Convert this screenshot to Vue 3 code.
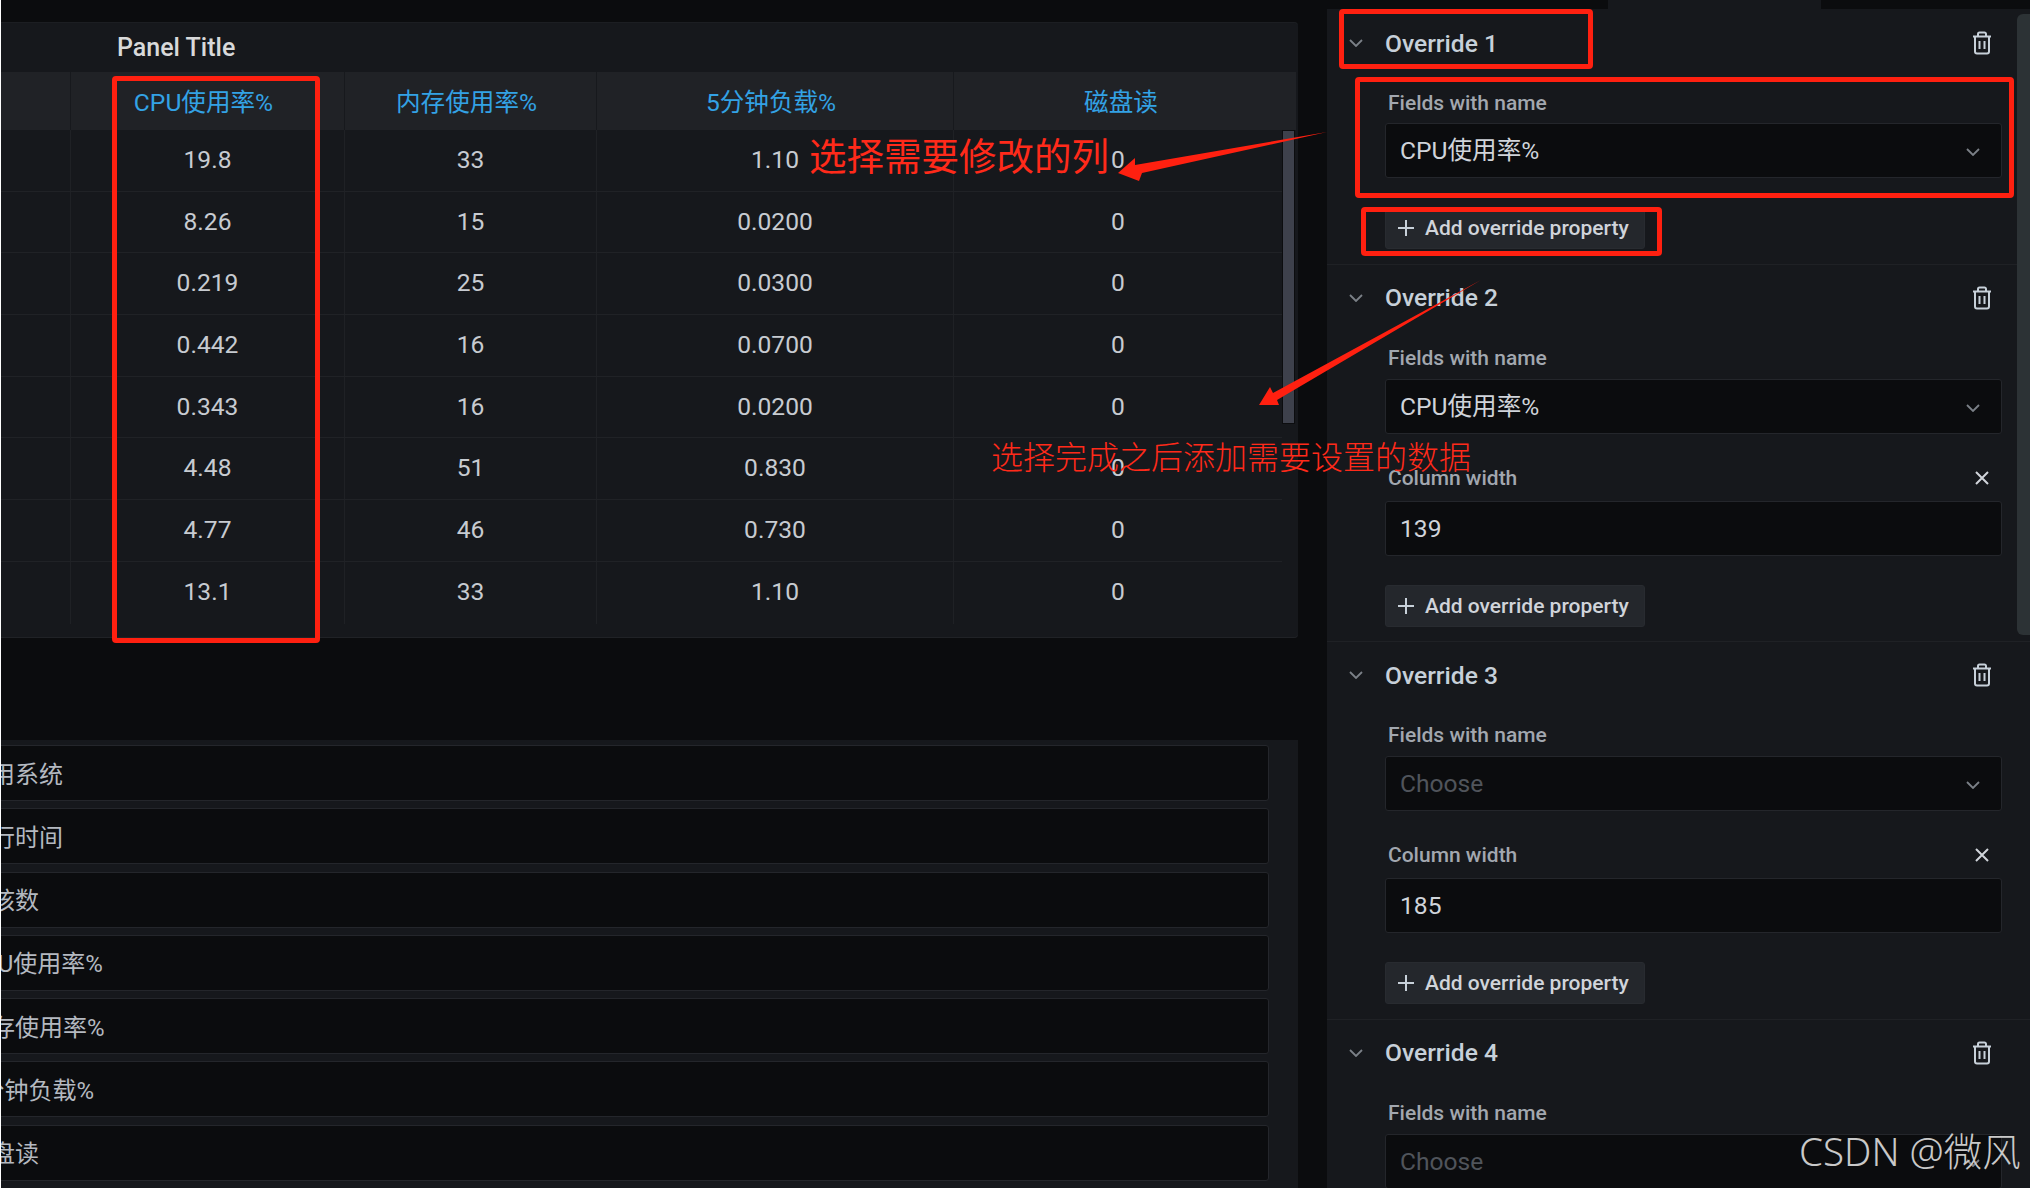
<script setup>
const rows = [
  ['19.8', '33', '1.10', '0'],
  ['8.26', '15', '0.0200', '0'],
  ['0.219', '25', '0.0300', '0'],
  ['0.442', '16', '0.0700', '0'],
  ['0.343', '16', '0.0200', '0'],
  ['4.48', '51', '0.830', '0'],
  ['4.77', '46', '0.730', '0'],
  ['13.1', '33', '1.10', '0']
]
const headers = ['CPU使用率%', '内存使用率%', '5分钟负载%', '磁盘读']
const options = ['应用系统', '运行时间', '内核数', 'CPU使用率%', '内存使用率%', '5分钟负载%', '磁盘读']
const overrides = [
  { name: 'Override 1', field: 'CPU使用率%', width: null },
  { name: 'Override 2', field: 'CPU使用率%', width: '139' },
  { name: 'Override 3', field: '', width: '185' },
  { name: 'Override 4', field: '', width: null, last: true }
]
</script>

<template>
  <div class="page">
    <main class="main">
      <section class="panel">
        <h2 class="panel-title">Panel Title</h2>
        <div class="grid head-row">
          <div class="cell head-cell"></div>
          <div v-for="h in headers" :key="h" class="cell head-cell">{{ h }}</div>
        </div>
        <div class="table-body">
          <div v-for="(r, i) in rows" :key="i" class="grid body-row">
            <div class="cell"></div>
            <div v-for="(v, j) in r" :key="j" class="cell">{{ v }}</div>
          </div>
        </div>
        <div class="table-scroll"></div>
      </section>
      <section class="options">
        <div v-for="o in options" :key="o" class="option">{{ o }}</div>
      </section>
    </main>

    <div class="gutter"></div>

    <aside class="side">
      <div class="side-top"><div class="tab"></div></div>
      <div class="side-body">
        <div v-for="o in overrides" :key="o.name" class="override">
          <div class="override-head">
            <svg class="chev" viewBox="0 0 14 8"><path d="M1 1l6 6 6-6" /></svg>
            <span class="override-name">{{ o.name }}</span>
            <svg class="trash" viewBox="0 0 20 24">
              <path d="M6 5V3a1.5 1.5 0 0 1 1.5-1.5h5A1.5 1.5 0 0 1 14 3v2M1 5.5h18M3 5.5v15a2 2 0 0 0 2 2h10a2 2 0 0 0 2-2v-15M7.5 10v8M12.5 10v8" />
            </svg>
          </div>
          <div class="label">Fields with name</div>
          <div class="control">
            <span v-if="o.field">{{ o.field }}</span>
            <span v-else class="placeholder">Choose</span>
            <svg class="chev select-chev" viewBox="0 0 14 8"><path d="M1 1l6 6 6-6" /></svg>
          </div>
          <template v-if="o.width">
            <div class="label label-prop">
              <span>Column width</span>
              <svg class="close" viewBox="0 0 14 14"><path d="M1 1l12 12M13 1L1 13" /></svg>
            </div>
            <div class="control">{{ o.width }}</div>
          </template>
          <button v-if="!o.last" class="add" type="button">
            <svg class="plus" viewBox="0 0 16 16"><path d="M8 0v16M0 8h16" /></svg>
            Add override property
          </button>
        </div>
      </div>
      <div class="side-scroll"></div>
    </aside>

    <div class="mark box-cpu"></div>
    <div class="mark box-title"></div>
    <div class="mark box-field"></div>
    <div class="mark box-add"></div>
    <svg class="arrows" viewBox="0 0 2044 1188">
      <polygon points="1327,132 1135,165 1135,158 1118,173 1139,181 1142,173" />
      <polygon points="1481,280 1273,393 1270,387 1259,405 1279,405 1277,400" />
    </svg>
    <div class="note note-one">选择需要修改的列</div>
    <div class="note note-two">选择完成之后添加需要设置的数据</div>
    <div class="watermark">CSDN @微风</div>
  </div>
</template>

<style scoped>
.page {
  position: relative;
  width: 2044px;
  height: 1188px;
  overflow: hidden;
  box-sizing: border-box;
  display: flex;
  padding: 0 14px 0 1px;
  background: #fff;
  font-family: Roboto, "Noto Sans CJK SC", sans-serif;
  font-size: 24.6px;
  color: #c7cbd1;
}
.main {
  flex: none;
  width: 1297px;
  height: 1188px;
  padding-top: 22px;
  box-sizing: border-box;
  background: #0b0c0e;
  overflow: hidden;
  display: flex;
  flex-direction: column;
}
.panel {
  position: relative;
  height: 616px;
  flex: none;
  background: #16181c;
  border-radius: 0 4px 4px 0;
  box-shadow: inset 0 -1px 0 #202226, inset 0 1px 0 #1c1e22;
}
.panel-title {
  margin: 0;
  height: 50px;
  padding: 1px 0 0 116px;
  box-sizing: border-box;
  line-height: 50px;
  font-size: 25px;
  font-weight: 500;
  color: #d8d9da;
}
.grid {
  display: grid;
  grid-template-columns: 70px 274px 252px 357px 1fr;
}
.head-row {
  height: 58px;
  width: 1295px;
  background: #202226;
  color: #33a2e5;
}
.body-row {
  height: 61.7px;
  width: 1281px;
  box-sizing: border-box;
  border-bottom: 1px solid #202226;
}
.body-row:last-child {
  border-bottom: 0;
}
.cell {
  display: flex;
  align-items: center;
  justify-content: center;
  padding-bottom: 2px;
  box-sizing: border-box;
  border-right: 1px solid #1f2125;
}
.cell:last-child {
  border-right: 0;
}
.head-cell {
  padding: 0 8px 2px 0;
  border-right-color: #17191d;
}
.table-scroll {
  position: absolute;
  top: 108px;
  right: 3px;
  width: 13px;
  height: 294px;
  box-sizing: border-box;
  background: #3e414c;
  border: 1px solid #0c0d0f;
}
.options {
  flex: 1;
  margin-top: 102px;
  padding: 5px 29px 0 0;
  background: #16181c;
  display: flex;
  flex-direction: column;
  gap: 7.3px;
}
.option {
  flex: none;
  height: 56px;
  margin-left: -50px;
  padding: 3px 0 0 15px;
  box-sizing: border-box;
  display: flex;
  align-items: center;
  background: #0b0c0e;
  border: 1px solid #24262b;
  border-radius: 3px;
  font-size: 24px;
  line-height: 28px;
  color: #b4b9c0;
}
.gutter {
  flex: none;
  width: 29px;
  background: #0b0c0e;
}
.side {
  position: relative;
  flex: none;
  width: 703px;
  display: flex;
  flex-direction: column;
}
.side-top {
  flex: none;
  height: 9px;
  background: #0b0c0e;
}
.tab {
  width: 213px;
  height: 9px;
  margin-left: 281px;
  background: #16181c;
}
.side-body {
  flex: 1;
  background: #16181c;
}
.override {
  box-sizing: border-box;
  padding-bottom: 14.5px;
  border-bottom: 1px solid #1f2125;
}
.override-head {
  height: 66px;
  display: flex;
  align-items: center;
  padding: 0 38px 0 22px;
}
.override:first-child .override-head {
  height: 68px;
}
.override:first-child .label {
  margin-top: 14px;
  margin-bottom: 8px;
}
.chev {
  width: 14px;
  height: 8px;
  flex: none;
  fill: none;
  stroke: #7b8087;
  stroke-width: 1.8;
}
.override-name {
  margin-left: 22px;
  flex: 1;
  font-weight: 500;
  color: #c7d0d9;
}
.trash {
  width: 20px;
  height: 24px;
  fill: none;
  stroke: #c7d0d9;
  stroke-width: 2;
}
.label {
  margin: 15px 28px 9px 58px;
  padding-left: 3px;
  height: 24px;
  line-height: 24px;
  font-size: 21px;
  font-weight: 500;
  color: #a2a7af;
}
.label-prop {
  margin-top: 32px;
  margin-bottom: 11px;
  padding-right: 13px;
  display: flex;
  align-items: center;
  justify-content: space-between;
}
.close {
  width: 14px;
  height: 14px;
  fill: none;
  stroke: #d0d4da;
  stroke-width: 2;
}
.control {
  height: 55px;
  margin: 0 28px 0 58px;
  padding: 1px 21px 0 14px;
  box-sizing: border-box;
  display: flex;
  align-items: center;
  justify-content: space-between;
  background: #0b0c0e;
  border: 1px solid #24262b;
  border-radius: 3px;
  line-height: 28px;
  color: #d0d4da;
}
.select-chev {
  margin-top: 2px;
}
.placeholder {
  color: #50545b;
}
.add {
  display: flex;
  align-items: center;
  gap: 11px;
  width: 260px;
  height: 42px;
  margin: 29px 0 0 58px;
  padding: 0 0 0 12px;
  box-sizing: border-box;
  background: #24272c;
  border: 1px solid #282b30;
  border-radius: 3px;
  font-family: inherit;
  font-size: 21px;
  font-weight: 500;
  color: #d0d4da;
}
.plus {
  width: 16px;
  height: 16px;
  flex: none;
  stroke: #c7d0d9;
  stroke-width: 2;
}
.side-scroll {
  position: absolute;
  top: 14px;
  right: 0;
  width: 13px;
  height: 621px;
  background: #2c3235;
  border-radius: 6px 0 0 6px;
}
.mark {
  position: absolute;
  z-index: 3;
  box-sizing: border-box;
  border: 5px solid #ff2010;
  border-radius: 4px;
}
.box-cpu { left: 112px; top: 76px; width: 208px; height: 567px; }
.box-title { left: 1339px; top: 9px; width: 254px; height: 60px; }
.box-field { left: 1355px; top: 77px; width: 659px; height: 121px; }
.box-add { left: 1361px; top: 207px; width: 301px; height: 49px; }
.arrows {
  position: absolute;
  z-index: 3;
  left: 0;
  top: 0;
  width: 2044px;
  height: 1188px;
  fill: #ff2010;
}
.note {
  position: absolute;
  z-index: 3;
  white-space: nowrap;
  font-family: "Noto Sans CJK SC", sans-serif;
  font-weight: 400;
  color: #ff2a1a;
  line-height: 1;
}
.note-one { left: 809px; top: 135px; font-size: 37.5px; }
.note-two { left: 991px; top: 439px; font-size: 32px; font-weight: 300; }
.watermark {
  position: absolute;
  z-index: 3;
  left: 1799px;
  top: 1130px;
  white-space: nowrap;
  font-family: "Noto Sans", "Noto Sans CJK SC", sans-serif;
  font-weight: 300;
  font-size: 38.5px;
  line-height: 42px;
  color: #c9c9c9;
}
</style>
